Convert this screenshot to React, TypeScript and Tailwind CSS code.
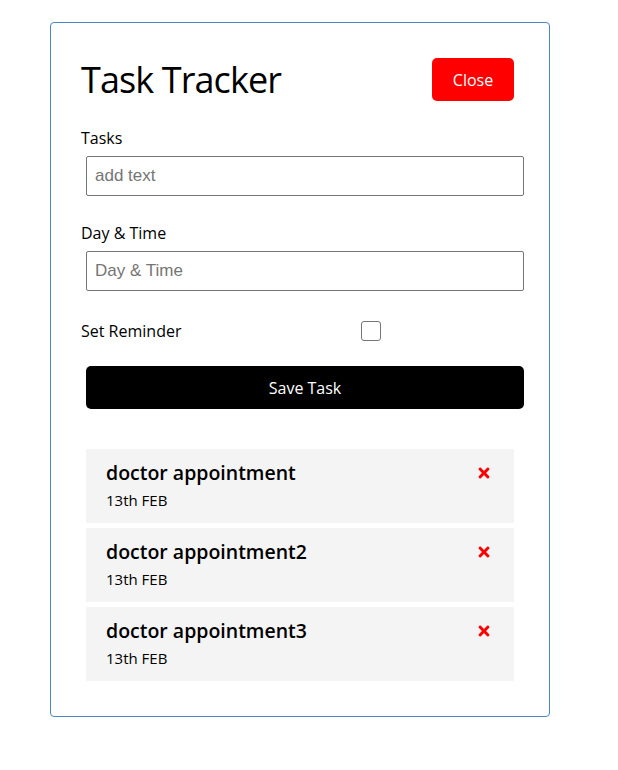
import { FaTimes } from 'react-icons/fa'

const tasks = [
  { id: 1, text: 'doctor appointment', day: '13th FEB' },
  { id: 2, text: 'doctor appointment2', day: '13th FEB' },
  { id: 3, text: 'doctor appointment3', day: '13th FEB' },
]

export default function App() {
  return (
    <div className="min-h-screen bg-white pt-[22px] pl-[50px] font-['Open_Sans',sans-serif] text-black">
      <div className="w-[500px] h-[695px] border border-[#4a86c0] rounded-[4px] p-[30px]">
        <header className="flex items-center justify-between h-[53px]">
          <h1 className="text-[36px] leading-none font-medium tracking-tight">Task Tracker</h1>
          <button className="mr-[5px] w-[82px] h-[43px] rounded-[5px] bg-[#ff0000] text-white text-[16px]">
            Close
          </button>
        </header>

        <form className="mt-[20px]">
          <div className="mb-[25px]">
            <label className="block text-[16px] leading-[24px] mb-[6px]">Tasks</label>
            <input
              type="text"
              placeholder="add text"
              className="block ml-[5px] w-[438px] h-[40px] border border-[#767676] rounded-[2px] px-[8px] text-[17px] font-['Liberation_Sans',sans-serif] placeholder:text-[#757575]"
            />
          </div>
          <div className="mb-[20px]">
            <label className="block text-[16px] leading-[24px] mb-[6px]">Day &amp; Time</label>
            <input
              type="text"
              placeholder="Day & Time"
              className="block ml-[5px] w-[438px] h-[40px] border border-[#767676] rounded-[2px] px-[8px] text-[17px] font-['Liberation_Sans',sans-serif] placeholder:text-[#757575]"
            />
          </div>
          <div className="flex items-center h-[40px] mb-[15px]">
            <label className="w-[280px] text-[16px]">Set Reminder</label>
            <span className="w-[20px] h-[20px] border border-[#767676] rounded-[3px] bg-white" />
          </div>
          <button
            type="button"
            className="block ml-[5px] w-[438px] h-[43px] rounded-[5px] bg-black text-white text-[16px]"
          >
            Save Task
          </button>
        </form>

        <div className="mt-[40px] flex flex-col gap-[5px]">
          {tasks.map((task) => (
            <div key={task.id} className="mx-[5px] h-[74px] bg-[#f4f4f4] px-[20px] pt-[12px]">
              <h3 className="flex items-center justify-between text-[19.5px] font-semibold leading-[24px]">
                {task.text}
                <FaTimes className="text-[#ff0000] mr-[2px]" size={16} />
              </h3>
              <p className="text-[15px] leading-[24px] mt-[3px]">{task.day}</p>
            </div>
          ))}
        </div>
      </div>
    </div>
  )
}
